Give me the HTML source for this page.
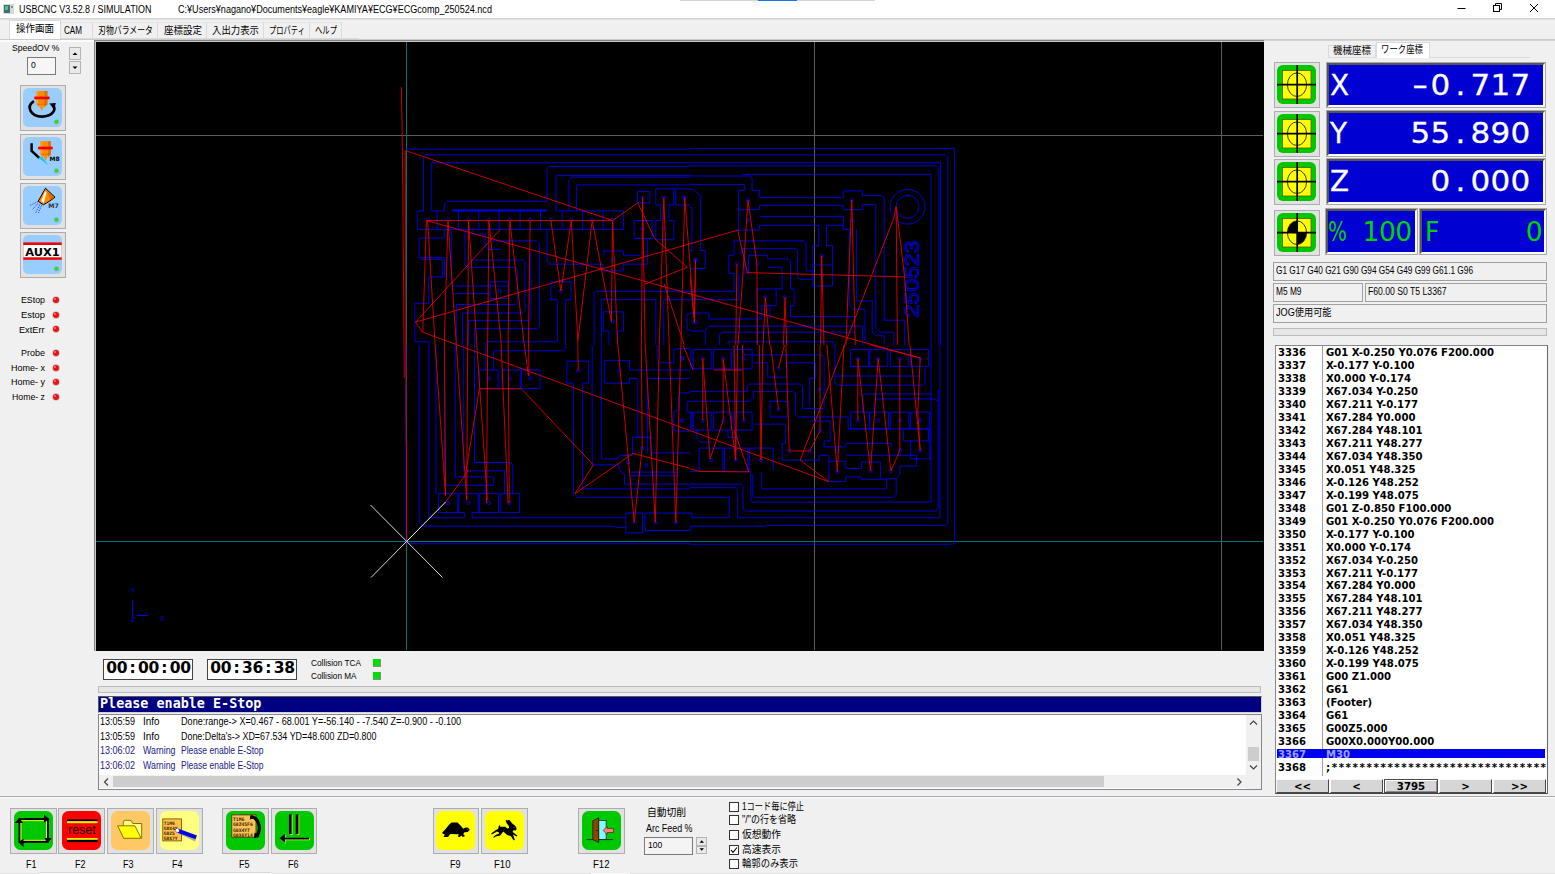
<!DOCTYPE html>
<html lang="ja">
<head>
<meta charset="utf-8">
<title>USBCNC V3.52.8 / SIMULATION</title>
<style>
*{box-sizing:border-box;margin:0;padding:0}
html,body{width:1555px;height:874px;overflow:hidden;background:#f0f0f0}
body{position:relative;font-family:"Liberation Sans","Noto Sans CJK JP",sans-serif;font-size:9.5px;color:#000}
.abs{position:absolute}
.t{position:absolute;white-space:nowrap;transform-origin:0 50%}
.frame{position:absolute;background:#e1e1e1;border:1px solid #adadad}
.ib{position:absolute;border-radius:6px}
.sbox{position:absolute;border:1px solid #a0a0a0;background:#f0f0f0}
.dro{position:absolute;background:#0000d2;border:2px solid #555;border-right-color:#fafafa;border-bottom-color:#fafafa;box-shadow:0 0 0 1px #a9a9a9}
.nav{position:absolute;top:779px;height:14px;background:#e1e1e1;border:1px solid #6d6d6d;border-top-color:#fff;border-left-color:#fff;box-shadow:0 0 0 1px #7a7a7a}
.cb{position:absolute;left:729px;width:10px;height:10px;border:1px solid #333;background:#fff}
</style>
</head>
<body>
<div class="abs" style="left:0;top:0;width:1555px;height:18px;background:#fff"></div>
<div class="abs" style="left:0;top:18px;width:1555px;height:2px;background:linear-gradient(#cdcdcd,#e6e6e6)"></div>
<div class="abs" style="left:680px;top:0;width:195px;height:1px;background:#d4d4d4"></div>
<div class="abs" style="left:758px;top:0;width:39px;height:1px;background:#1a73e8"></div>
<svg class="abs" style="left:3px;top:4px" width="11" height="10" viewBox="0 0 11 10"><rect x="0" y="0" width="11" height="10" fill="#d5dadd"/><rect x="1" y="1" width="6" height="8" fill="#3f6f74"/><rect x="2" y="2" width="3" height="4" fill="#5fb784"/><rect x="8" y="2" width="2" height="2" fill="#7f8f95"/></svg>
<div class="t" style="left:19px;top:3.5px;font-size:10px;line-height:12.0px;transform:scaleX(0.894)">USBCNC V3.52.8 / SIMULATION</div>
<div class="t" style="left:178px;top:3.5px;font-size:10px;line-height:12.0px;transform:scaleX(0.907)">C:¥Users¥nagano¥Documents¥eagle¥KAMIYA¥ECG¥ECGcomp_250524.ncd</div>
<svg class="abs" style="left:1440px;top:0" width="115" height="18" viewBox="0 0 115 18"><path d="M17.5 8.5h8" stroke="#000" stroke-width="1" fill="none"/><rect x="53.5" y="5.500" width="6" height="6" stroke="#000" fill="none"/><path d="M55.500 5.500v-2h6v6h-2" stroke="#000" fill="none"/><path d="M90 4l8 8M98 4l-8 8" stroke="#000" stroke-width="1" fill="none"/></svg>
<div class="abs" style="left:9px;top:38px;width:350px;height:1px;background:#dadada"></div>
<div class="abs" style="left:9px;top:20px;width:52px;height:19px;background:#fff;border:1px solid #dadada;border-bottom:none"></div>
<div class="t" style="left:16px;top:22.5px;font-size:10px;line-height:12.0px;transform:scaleX(0.950)">操作画面</div>
<div class="abs" style="left:61px;top:22px;width:32px;height:16px;border-right:1px solid #dadada;border-top:1px solid #e6e6e6"></div>
<div class="t" style="left:64px;top:24.5px;font-size:10px;line-height:12.0px;transform:scaleX(0.810)">CAM</div>
<div class="abs" style="left:93px;top:22px;width:65px;height:16px;border-right:1px solid #dadada;border-top:1px solid #e6e6e6"></div>
<div class="t" style="left:98.0px;top:24.5px;font-size:10px;line-height:12.0px;transform:scaleX(0.789)">刃物パラメータ</div>
<div class="abs" style="left:158px;top:22px;width:49px;height:16px;border-right:1px solid #dadada;border-top:1px solid #e6e6e6"></div>
<div class="t" style="left:163.5px;top:24.5px;font-size:10px;line-height:12.0px;transform:scaleX(0.950)">座標設定</div>
<div class="abs" style="left:207px;top:22px;width:57px;height:16px;border-right:1px solid #dadada;border-top:1px solid #e6e6e6"></div>
<div class="t" style="left:212.0px;top:24.5px;font-size:10px;line-height:12.0px;transform:scaleX(0.940)">入出力表示</div>
<div class="abs" style="left:264px;top:22px;width:46px;height:16px;border-right:1px solid #dadada;border-top:1px solid #e6e6e6"></div>
<div class="t" style="left:269.0px;top:24.5px;font-size:10px;line-height:12.0px;transform:scaleX(0.729)">プロパティ</div>
<div class="abs" style="left:310px;top:22px;width:32px;height:16px;border-right:1px solid #dadada;border-top:1px solid #e6e6e6"></div>
<div class="t" style="left:315.0px;top:24.5px;font-size:10px;line-height:12.0px;transform:scaleX(0.733)">ヘルプ</div>
<div class="t" style="left:11.5px;top:42.3px;font-size:9.5px;line-height:11.4px;transform:scaleX(0.908)">SpeedOV %</div>
<div class="abs" style="left:27px;top:57px;width:29px;height:18px;background:#f6f6f6;border:1px solid #7a7a7a"></div>
<div class="t" style="left:30.5px;top:59.3px;font-size:9.5px;line-height:11.4px;transform:scaleX(0.900)">0</div>
<div class="abs" style="left:69px;top:47px;width:12px;height:13px;background:#e9e9e9;border:1px solid #b4b4b4"></div>
<div class="abs" style="left:69px;top:61px;width:12px;height:13px;background:#e9e9e9;border:1px solid #b4b4b4"></div>
<svg class="abs" style="left:69px;top:47px" width="12" height="27" viewBox="0 0 12 27"><path d="M3.5 8L6 5.500L8.500 8z" fill="#000"/><path d="M3.500 19.5L6 22L8.500 19.500z" fill="#000"/></svg>
<div class="frame" style="left:20px;top:85px;width:46px;height:46px"></div>
<svg class="abs" style="left:23.100px;top:88px" width="39" height="39" viewBox="0 0 39 39"><rect x="0" y="0" width="39" height="39" rx="5.500" fill="#99ccff"/><path d="M13.2 3h11.200v13.200l-2.200 2.300h-1.300l-2.100 4.300l-2.100 -4.300h-1.300l-2.200 -2.300z" fill="#ff8c00"/><path d="M21.500 3h2.900v13.200l-2.200 2.300h-0.700z" fill="#e07000"/><path d="M13.200 3h2v13.200h-2z" fill="#ffa030"/><path d="M14.500 16.200h8.600" stroke="#c65a00" stroke-width="0.600"/><rect x="11.300" y="8.600" width="15.300" height="2.700" fill="#f00000"/><path d="M10 13.800C3.500 18.500 7 28.300 19 28.600C29 28.600 33.800 22 30 17.300" fill="none" stroke="#000" stroke-width="2.700" stroke-linecap="round"/><path d="M26.300 15.600l6.500 -0.600l-1.500 6.600z" fill="#000"/><circle cx="33.5" cy="33.8" r="2.600" fill="#9ab" opacity="0.7"/><circle cx="33.5" cy="33.8" r="2" fill="#22e022"/></svg>
<div class="frame" style="left:20px;top:133.5px;width:46px;height:46px"></div>
<svg class="abs" style="left:23.100px;top:136.5px" width="39" height="39" viewBox="0 0 39 39"><rect x="0" y="0" width="39" height="39" rx="5.500" fill="#99ccff"/><path d="M17.200 4.300h10.600v12.900l-2.100 2.200h-1.300l-1.900 4.600l-1.900 -4.600h-1.300l-2.100 -2.200z" fill="#ff8c00"/><path d="M25 4.300h2.800v12.900l-2.100 2.200h-0.700z" fill="#e07000"/><path d="M17.200 4.300h2v12.900h-2z" fill="#ffa030"/><path d="M18.500 17.200h8" stroke="#c65a00" stroke-width="0.600"/><rect x="15.100" y="9.700" width="14.600" height="2.700" fill="#f00000"/><path d="M8.600 6.300v7.600l7.600 7" fill="none" stroke="#000" stroke-width="2.500" stroke-linejoin="miter"/><path d="M15.500 21l3.500 -1.800l6.200 9z" fill="#18c8e8"/><text x="26.500" y="24" font-family="'DejaVu Sans','Liberation Sans',sans-serif" font-weight="bold" font-size="6" fill="#000">M8</text><circle cx="33.5" cy="33.8" r="2.600" fill="#9ab" opacity="0.7"/><circle cx="33.5" cy="33.8" r="2" fill="#22e022"/></svg>
<div class="frame" style="left:20px;top:183px;width:46px;height:46px"></div>
<svg class="abs" style="left:23.100px;top:186px" width="39" height="39" viewBox="0 0 39 39"><rect x="0" y="0" width="39" height="39" rx="5.500" fill="#99ccff"/><path d="M22.500 2.300L32 11.200C29 13.500 24 17 20.300 18.800L15.200 15.200z" fill="#ff8c00" stroke="#000" stroke-width="1"/><path d="M21.900 5.200L23.600 6.300L20.800 17L18.300 15.300z" fill="#fff" opacity="0.900"/><path d="M24 5.200L30.800 11.500L27.500 13.800z" fill="#d66a00"/><path d="M15 15.500L7 19.500M16 16.500L9 24M17.500 17.500L12.500 27M19 18.500L15 27.500" stroke="#2244ff" stroke-width="1" stroke-dasharray="1.100 0.900" fill="none"/><text x="25.300" y="22" font-family="'DejaVu Sans','Liberation Sans',sans-serif" font-weight="bold" font-size="6.200" fill="#333">M7</text><circle cx="33.5" cy="33.8" r="2.600" fill="#9ab" opacity="0.7"/><circle cx="33.5" cy="33.8" r="2" fill="#22e022"/></svg>
<div class="frame" style="left:20px;top:231.5px;width:46px;height:46px"></div>
<svg class="abs" style="left:23.100px;top:234.5px" width="39" height="39" viewBox="0 0 39 39"><rect x="0" y="0" width="39" height="39" rx="5.500" fill="#99ccff"/><rect x="0.300" y="7.400" width="38.400" height="17.400" fill="#f00000"/><rect x="0.300" y="10" width="38.400" height="12.300" fill="#fff"/><text x="2.300" y="20.800" font-family="'DejaVu Sans','Liberation Sans',sans-serif" font-weight="bold" font-size="11.300" textLength="34.500" lengthAdjust="spacingAndGlyphs" fill="#000">AUX1</text><circle cx="33.5" cy="33.8" r="2.600" fill="#9ab" opacity="0.7"/><circle cx="33.5" cy="33.8" r="2" fill="#22e022"/></svg>
<div class="t" style="left:20.5px;top:294.1px;font-size:9.5px;line-height:11.4px;transform:scaleX(0.927)">EStop</div>
<svg class="abs" style="left:51px;top:294.8px" width="10" height="10" viewBox="0 0 10 10"><circle cx="5" cy="5" r="3.800" fill="#b8a0a0" opacity="0.700"/><circle cx="5" cy="5" r="3" fill="#ee1111"/><circle cx="4" cy="4" r="1" fill="#ff8080"/></svg>
<div class="t" style="left:20.5px;top:309.3px;font-size:9.5px;line-height:11.4px;transform:scaleX(0.988)">Estop</div>
<svg class="abs" style="left:51px;top:310.0px" width="10" height="10" viewBox="0 0 10 10"><circle cx="5" cy="5" r="3.800" fill="#b8a0a0" opacity="0.700"/><circle cx="5" cy="5" r="3" fill="#ee1111"/><circle cx="4" cy="4" r="1" fill="#ff8080"/></svg>
<div class="t" style="left:19.0px;top:323.7px;font-size:9.5px;line-height:11.4px;transform:scaleX(0.966)">ExtErr</div>
<svg class="abs" style="left:51px;top:324.4px" width="10" height="10" viewBox="0 0 10 10"><circle cx="5" cy="5" r="3.800" fill="#b8a0a0" opacity="0.700"/><circle cx="5" cy="5" r="3" fill="#ee1111"/><circle cx="4" cy="4" r="1" fill="#ff8080"/></svg>
<div class="t" style="left:20.5px;top:347.3px;font-size:9.5px;line-height:11.4px;transform:scaleX(0.946)">Probe</div>
<svg class="abs" style="left:51px;top:348.0px" width="10" height="10" viewBox="0 0 10 10"><circle cx="5" cy="5" r="3.800" fill="#b8a0a0" opacity="0.700"/><circle cx="5" cy="5" r="3" fill="#ee1111"/><circle cx="4" cy="4" r="1" fill="#ff8080"/></svg>
<div class="t" style="left:10.5px;top:362.3px;font-size:9.5px;line-height:11.4px;transform:scaleX(0.947)">Home- x</div>
<svg class="abs" style="left:51px;top:363.0px" width="10" height="10" viewBox="0 0 10 10"><circle cx="5" cy="5" r="3.800" fill="#b8a0a0" opacity="0.700"/><circle cx="5" cy="5" r="3" fill="#ee1111"/><circle cx="4" cy="4" r="1" fill="#ff8080"/></svg>
<div class="t" style="left:10.5px;top:376.3px;font-size:9.5px;line-height:11.4px;transform:scaleX(0.947)">Home- y</div>
<svg class="abs" style="left:51px;top:377.0px" width="10" height="10" viewBox="0 0 10 10"><circle cx="5" cy="5" r="3.800" fill="#b8a0a0" opacity="0.700"/><circle cx="5" cy="5" r="3" fill="#ee1111"/><circle cx="4" cy="4" r="1" fill="#ff8080"/></svg>
<div class="t" style="left:11.5px;top:391.0px;font-size:9.5px;line-height:11.4px;transform:scaleX(0.919)">Home- z</div>
<svg class="abs" style="left:51px;top:391.7px" width="10" height="10" viewBox="0 0 10 10"><circle cx="5" cy="5" r="3.800" fill="#b8a0a0" opacity="0.700"/><circle cx="5" cy="5" r="3" fill="#ee1111"/><circle cx="4" cy="4" r="1" fill="#ff8080"/></svg>
<div class="abs" style="left:0;top:39px;width:1555px;height:2px;background:linear-gradient(#c6c6c6,#d8d8d8)"></div>
<div class="abs" style="left:0;top:40px;width:94px;height:2px;background:#fbfbfb"></div>
<div class="abs" style="left:94px;top:40px;width:1170px;height:611px;background:#c8c8c8;border-left:1px solid #828282;border-top:1px solid #828282"></div>
<div class="abs" style="left:96px;top:42px;width:1167.500px;height:608.500px;background:#000"></div>
<svg class="abs" style="left:96px;top:42px" width="1167" height="608" viewBox="96 42 1167 608">
<rect x="96" y="42" width="1167" height="608" fill="#000"/>
<path d="M96 135.500H1263M814.500 41V651M1221.500 41V651" stroke="#5c5c5c" stroke-width="1" fill="none"/>
<path d="M96 541.500H1263M406.500 41V651" stroke="#007474" stroke-width="1" fill="none"/>
<defs><clipPath id="c400_140"><rect x="396" y="130" width="294" height="215"/></clipPath><clipPath id="c680_140"><rect x="690" y="130" width="290" height="215"/></clipPath><clipPath id="c400_340"><rect x="396" y="345" width="294" height="215"/></clipPath><clipPath id="c680_340"><rect x="690" y="345" width="290" height="215"/></clipPath></defs>
<g fill="none" stroke="#0000f0" stroke-width="0.900" stroke-linejoin="round">
<path clip-path="url(#c400_140)" d="M406.0 149.1L700.0 149.1M700.0 154.9L425.2 154.9L423.5 156.8L423.5 210.9L417.3 210.9L417.3 229.4L623.4 229.4M700.0 162.8L431.2 162.8L431.2 210.9L444.4 210.9L444.4 203.7L446.8 201.3L547.0 201.3L547.0 168.3L548.9 166.4L700.0 166.4M437.2 210.9L437.2 229.4M458.4 210.4L458.4 229.4M478.8 210.4L478.8 229.4M499.2 210.4L499.2 229.4M520.1 210.4L520.1 229.4M540.5 210.4L540.5 229.4M700.0 175.6L556.1 175.6L556.1 210.9L623.4 210.9L623.4 229.4M562.1 210.9L562.1 229.4M582.6 210.9L582.6 229.4M603.0 210.9L603.0 229.4M700.0 177.2L571.8 177.2L568.9 180.1L568.9 210.9M700.0 184.9L576.6 184.9L576.6 210.9M637.3 191.6L649.8 191.6L649.8 202.9L637.3 202.9ZM655.8 188.8L673.8 188.8L673.8 204.9L669.0 204.9L669.0 220.5L673.8 220.5L673.8 239.7L655.8 239.7L655.8 220.5L660.6 220.5L660.6 204.9L655.8 204.9ZM700.0 191.6L695.5 191.6L693.1 188.8L675.8 188.8L675.8 204.9L691.9 204.9L691.9 250.5L700.0 250.5M634.2 220.5L652.2 220.5L652.2 238.5L634.2 238.5ZM444.4 229.4L444.4 238.0L419.2 238.0L419.2 257.7L444.4 257.7L444.4 276.9L428.8 276.9L428.8 303.3L414.9 303.3L414.9 341.8L428.8 341.8L428.8 349.9M421.1 259.4L442.3 259.4L442.3 278.1M451.6 229.4L451.6 284.1L453.3 286.0L509.3 286.0M472.1 229.4L472.1 234.2L485.3 234.2L485.3 245.7L488.4 249.3L500.9 249.3M492.5 240.9L536.9 240.9L539.3 243.3L539.3 326.2L536.9 328.6L474.5 328.6L474.5 349.9M464.9 229.4L464.9 264.9L467.3 267.3L515.3 267.3L517.7 269.7L517.7 302.1L515.3 304.5L456.4 304.5L456.4 349.9M469.7 260.1L522.5 260.1L524.9 262.5L524.9 310.6L522.5 313.0L462.5 313.0L462.5 349.9M530.9 252.9L530.9 319.0L528.5 320.6L468.5 320.6L468.5 349.9M490.1 281.7L508.1 281.7L508.1 298.5L490.1 298.5ZM452.8 293.7L490.1 293.7M547.0 229.4L547.0 261.3L550.1 264.2L603.0 264.2L603.0 270.9L623.4 270.9L623.4 264.2L647.4 264.2L647.4 239.7M603.7 255.3L603.7 251.0L623.4 251.0L623.4 255.3L640.2 255.3M565.7 349.9L565.7 299.7L571.0 299.7L571.0 281.7L550.9 281.7L550.9 299.7L557.3 299.7L557.3 341.8L486.5 341.8L484.1 344.2L484.1 349.9M594.1 349.9L594.1 293.7L596.5 291.3L700.0 291.3M601.3 349.9L601.3 299.7L655.8 299.7L655.8 349.9M663.8 349.9L663.8 299.7L700.0 299.7M617.4 349.9L617.4 331.0L623.4 331.0L623.4 311.8L603.0 311.8L603.0 331.0L609.0 331.0L609.0 349.9M700.0 314.2L687.1 314.2L687.1 329.8L700.0 329.8"/>
<path clip-path="url(#c680_140)" d="M680.0 148.4L954.6 148.4L954.6 349.9M680.0 154.9L945.4 154.9L947.8 157.3L947.8 349.9M680.0 162.8L940.6 162.8L940.6 349.9M680.0 165.9L936.5 165.9L938.9 168.3L938.9 349.9M742.5 174.4L931.0 174.4L931.0 349.9M680.0 176.0L749.7 176.0L752.1 178.4L752.1 190.4L759.3 190.4L759.3 197.7L843.3 197.7L843.3 190.9L862.6 190.9L862.6 195.7L881.8 195.7L884.2 198.1L884.2 320.2L904.6 320.2L904.6 349.9M680.0 184.4L744.4 184.4L744.4 190.4L738.4 190.4L738.4 230.1L759.3 230.1L759.3 225.3L818.8 225.3L818.8 245.7L812.8 245.7L812.8 286.0L832.5 286.0L832.5 245.7L826.5 245.7L826.5 225.3L843.3 225.3L843.3 229.4M738.4 209.7L759.3 209.7L759.3 205.3L843.3 205.3L843.3 209.7L862.6 209.7L862.6 204.4L875.8 204.4L875.8 327.4L880.6 332.2L893.8 332.2L893.8 349.9M759.3 216.4L843.3 216.4L843.3 229.4L849.3 229.4L849.3 305.7L853.0 309.3L865.0 309.3L865.0 339.4L869.8 344.2L869.8 349.9M856.6 229.4L856.6 300.9L872.2 300.9L872.2 332.2L875.8 335.8L884.2 335.8L884.2 349.9M812.8 264.9L832.5 264.9M680.0 189.2L693.2 189.2L695.6 191.6L700.4 195.2L700.4 250.5L705.2 250.5L705.2 268.5L680.0 268.5M680.0 207.3L692.0 207.3L692.0 250.5L680.0 250.5M734.0 291.3L734.0 273.3L728.8 273.3L728.8 255.3L734.0 255.3L734.0 240.9L803.7 240.9L806.1 243.3L806.1 270.9L812.8 270.9M680.0 291.3L734.0 291.3M741.3 255.3L741.3 248.6L795.3 248.6L797.7 251.0L797.7 276.9L800.1 279.3L812.8 279.3M744.9 255.3L744.9 273.3L748.5 273.3L748.5 255.3L767.7 255.3L767.7 258.9L788.1 258.9L790.5 261.3L790.5 288.9L794.1 288.9L794.1 305.7L790.5 305.7L790.5 316.6L854.2 316.6M767.7 267.3L782.1 267.3L782.1 288.9L757.3 288.9L757.3 349.9M776.1 288.9L776.1 305.7L770.1 305.7L770.1 319.0M680.0 299.7L738.9 299.7L738.9 273.3M688.4 331.0L688.4 313.0L708.8 313.0L708.8 319.0L761.7 319.0L761.7 305.7L770.1 305.7M688.4 331.0L704.0 331.0L708.8 326.2L862.6 326.2L862.6 349.9M705.2 331.0L705.2 349.9M719.6 349.9L719.6 334.6L722.0 332.2L855.4 332.2M728.0 349.9L728.0 341.8L833.7 341.8L833.7 349.9"/>
<path clip-path="url(#c400_340)" d="M406.0 340.0L406.0 543.7L700.0 543.7M419.2 340.0L419.2 522.6L422.8 526.2L613.8 526.2L616.2 527.4L625.8 527.4M428.8 340.0L428.8 517.8L464.4 517.8L464.4 512.5L438.4 512.5L438.4 493.7L457.7 493.7L457.7 512.5M458.9 512.5L458.9 493.7L478.1 493.7L478.1 512.5M472.1 517.8L472.1 512.5L498.5 512.5L498.5 493.7L479.3 493.7L479.3 512.5M472.1 517.8L625.8 517.8M500.9 493.7L519.6 493.7L519.6 512.5L500.9 512.5ZM474.5 340.0L474.5 462.5L510.5 462.5L512.9 464.9L512.9 493.7M463.7 340.0L463.7 470.9L504.5 470.9L504.5 493.7M455.2 340.0L455.2 476.9L492.5 476.9L493.7 478.1L493.7 485.3L485.3 485.3L485.3 493.7M444.4 340.0L444.4 485.3L485.3 485.3M436.0 340.0L436.0 493.7M479.3 370.0L498.0 370.0L498.0 388.5L479.3 388.5ZM502.1 370.0L520.8 370.0L520.8 388.5L502.1 388.5ZM521.3 370.0L540.0 370.0L540.0 388.5L521.3 388.5ZM485.3 340.0L485.3 370.0M486.5 342.4L565.7 342.4M493.7 370.0L493.7 350.8L563.3 350.8L565.7 348.4L565.7 340.0M700.0 488.9L582.6 488.9L582.6 383.2L588.6 383.2L588.6 361.1L566.9 361.1L566.9 383.2L573.4 383.2L573.4 493.7L576.6 497.3L700.0 497.3M592.2 340.0L592.2 464.9L618.6 464.9L621.0 472.1L624.6 474.5L624.6 484.1L700.0 484.1M601.3 340.0L601.3 458.9L618.6 458.9L619.8 455.3L632.5 455.3L632.5 437.3L651.0 437.3L651.0 452.9L700.0 452.9M700.0 370.0L629.4 370.0L629.4 360.4L604.7 360.4L604.7 383.2L629.4 383.2L629.4 378.4L637.8 378.4L637.8 437.3M700.0 378.4L647.4 378.4L647.4 452.9M630.6 472.1L678.6 472.1M630.6 475.7L678.6 475.7M700.0 392.8L681.0 392.8L678.6 395.2L678.6 409.7L673.8 412.1L673.8 430.1L678.6 431.3L700.0 431.3M700.0 401.3L687.1 401.3L687.1 412.1L691.9 412.1L691.9 426.5L700.0 426.5M657.0 340.0L657.0 359.2L660.6 362.8L673.8 362.8L673.8 349.6L681.0 348.4L700.0 348.4M625.8 513.0L642.6 513.0L642.6 532.9L625.8 532.9ZM700.0 517.8L691.9 517.8L690.7 513.0L645.0 513.0L645.0 530.5L691.9 530.5L691.9 525.0L700.0 525.0"/>
<path clip-path="url(#c680_340)" d="M954.6 340.0L954.6 543.0L952.6 544.2L680.0 544.2M947.8 340.0L947.8 522.6L945.4 525.4L766.5 525.4L765.3 526.2L690.8 526.2L690.8 530.2L680.0 530.2M939.9 340.0L939.9 517.8L737.7 517.8L737.7 490.1L735.2 487.7L680.0 487.7M938.2 390.4L938.2 508.1L935.8 511.0L744.9 511.0L742.9 509.3L742.9 486.5L741.3 484.1L680.0 484.1M931.0 340.0L931.0 502.1L752.1 502.1L750.9 500.9L750.9 474.5L749.7 471.6L680.0 471.6M896.2 479.3L896.2 494.9L893.8 497.3L754.5 497.3L752.8 495.7L752.8 474.5M761.7 471.6L761.7 488.9L886.6 488.9L886.6 478.8L896.2 478.8M680.0 497.3L729.2 497.3L729.2 517.8L692.0 517.8L692.0 513.4L680.0 513.4M728.0 341.9L834.9 341.9L834.9 383.2L837.3 385.2L922.6 385.2L925.0 382.8L925.0 368.3M742.5 349.6L744.9 354.9L821.7 354.9L824.1 357.3L824.1 408.5L802.5 408.5L802.5 386.8L800.1 384.0L749.7 384.0L747.3 386.8L747.3 391.6L680.0 391.6M786.9 377.2L786.9 362.8L815.7 362.8L815.7 378.4L809.7 378.4L809.7 407.3M754.5 362.8L767.7 362.8L767.7 377.2L786.9 377.2M753.3 391.6L792.9 391.6L795.3 394.0L795.3 414.5L797.7 416.9L848.1 416.9L848.1 428.9L891.4 428.9M753.3 391.6L753.3 397.7L749.7 401.3L687.2 401.3L687.2 412.1L692.0 412.1L692.0 428.9M770.1 401.3L788.1 401.3L788.1 416.9L770.1 416.9ZM754.5 424.1L785.7 424.1L785.7 443.3L782.1 443.3L782.1 460.1L819.3 460.1L819.3 455.3L828.9 455.3L828.9 481.7L845.7 481.7L845.7 476.9L861.4 476.9L861.4 479.3L886.6 479.3M809.7 421.2L830.1 421.2L830.1 440.9L824.1 440.9L824.1 446.9L845.7 446.9L845.7 443.3L891.4 443.3L891.4 446.9M699.2 470.9L699.2 448.1L722.8 448.1L722.8 470.9M724.4 470.9L724.4 448.1L748.0 448.1L748.0 470.9M749.7 470.9L749.7 448.1L773.2 448.1L773.2 470.9M850.6 349.6L868.6 349.6L868.6 366.4L850.6 366.4ZM850.6 412.1L869.3 412.1L869.3 428.9L850.6 428.9ZM869.8 349.6L887.8 349.6L887.8 366.4L869.8 366.4ZM869.8 412.1L888.5 412.1L888.5 428.9L869.8 428.9ZM890.2 349.6L908.2 349.6L908.2 366.4L890.2 366.4ZM890.2 412.1L908.9 412.1L908.9 428.9L890.2 428.9ZM910.6 349.6L928.6 349.6L928.6 366.4L910.6 366.4ZM910.6 412.1L929.3 412.1L929.3 428.9L910.6 428.9ZM672.8 349.6L690.8 349.6L690.8 368.8L672.8 368.8ZM672.8 412.1L690.8 412.1L690.8 430.1L672.8 430.1ZM693.2 349.6L711.2 349.6L711.2 368.8L693.2 368.8ZM693.2 412.1L711.2 412.1L711.2 430.1L693.2 430.1ZM713.6 349.6L731.6 349.6L731.6 368.8L713.6 368.8ZM713.6 412.1L731.6 412.1L731.6 430.1L713.6 430.1ZM734.0 349.6L752.1 349.6L752.1 368.8L734.0 368.8ZM734.0 412.1L752.1 412.1L752.1 430.1L734.0 430.1ZM834.9 376.0L920.2 376.0M931.0 394.0L862.6 394.0L862.6 412.1M938.2 401.3L934.6 398.9L877.0 398.9L874.1 402.5L874.1 412.1M903.4 428.9L928.6 428.9L928.6 440.9L903.4 440.9ZM910.6 440.9L910.6 458.9L929.8 458.9L929.8 428.9M845.7 455.3L916.6 455.3L916.6 466.1L899.8 466.1L899.8 474.5L896.2 478.8M828.9 461.3L845.7 461.3L845.7 468.5L861.4 468.5L861.4 462.0L880.6 462.0L880.6 478.8M696.8 430.1L696.8 438.5L700.4 442.1L711.2 442.1M728.0 430.1L728.0 437.3L740.1 437.3"/>
<path stroke-width="2" d="M452.4 210.4L547.0 210.4"/>
<circle cx="907.500" cy="206.800" r="17.300"/><circle cx="907.500" cy="206.800" r="11.500"/>
<circle cx="427.6" cy="219.8" r="1.600"/><circle cx="448.0" cy="219.8" r="1.600"/><circle cx="468.5" cy="219.8" r="1.600"/><circle cx="488.9" cy="219.8" r="1.600"/><circle cx="509.8" cy="219.8" r="1.600"/><circle cx="530.2" cy="219.8" r="1.600"/><circle cx="550.9" cy="219.8" r="1.600"/><circle cx="571.3" cy="219.8" r="1.600"/><circle cx="592.2" cy="219.8" r="1.600"/><circle cx="612.6" cy="219.8" r="1.600"/><circle cx="642.6" cy="197.7" r="1.600"/><circle cx="663.8" cy="197.7" r="1.600"/><circle cx="684.7" cy="197.7" r="1.600"/><circle cx="642.6" cy="228.9" r="1.600"/><circle cx="663.8" cy="228.9" r="1.600"/><circle cx="560.9" cy="290.9" r="1.600"/><circle cx="612.6" cy="259.6" r="1.600"/><circle cx="612.6" cy="321.4" r="1.600"/><circle cx="499.7" cy="290.9" r="1.600"/><circle cx="695.5" cy="260.1" r="1.600"/><circle cx="695.5" cy="321.4" r="1.600"/><circle cx="684.1" cy="197.7" r="1.600"/><circle cx="695.6" cy="259.6" r="1.600"/><circle cx="748.0" cy="200.1" r="1.600"/><circle cx="748.0" cy="220.5" r="1.600"/><circle cx="851.8" cy="200.1" r="1.600"/><circle cx="851.8" cy="220.5" r="1.600"/><circle cx="736.9" cy="263.7" r="1.600"/><circle cx="757.3" cy="263.7" r="1.600"/><circle cx="821.7" cy="255.8" r="1.600"/><circle cx="821.7" cy="275.7" r="1.600"/><circle cx="765.3" cy="297.3" r="1.600"/><circle cx="785.0" cy="297.3" r="1.600"/><circle cx="694.4" cy="322.6" r="1.600"/><circle cx="448.0" cy="502.9" r="1.600"/><circle cx="468.5" cy="502.9" r="1.600"/><circle cx="488.9" cy="502.9" r="1.600"/><circle cx="509.3" cy="502.9" r="1.600"/><circle cx="489.4" cy="378.4" r="1.600"/><circle cx="509.8" cy="378.4" r="1.600"/><circle cx="530.2" cy="378.4" r="1.600"/><circle cx="578.2" cy="370.7" r="1.600"/><circle cx="619.1" cy="370.7" r="1.600"/><circle cx="642.1" cy="448.1" r="1.600"/><circle cx="628.2" cy="462.5" r="1.600"/><circle cx="646.2" cy="465.4" r="1.600"/><circle cx="682.2" cy="358.0" r="1.600"/><circle cx="682.2" cy="420.5" r="1.600"/><circle cx="634.9" cy="522.6" r="1.600"/><circle cx="655.3" cy="522.6" r="1.600"/><circle cx="675.8" cy="522.6" r="1.600"/><circle cx="682.4" cy="358.7" r="1.600"/><circle cx="702.8" cy="358.7" r="1.600"/><circle cx="723.2" cy="358.7" r="1.600"/><circle cx="743.7" cy="358.7" r="1.600"/><circle cx="857.8" cy="358.7" r="1.600"/><circle cx="878.2" cy="358.7" r="1.600"/><circle cx="899.8" cy="358.7" r="1.600"/><circle cx="920.2" cy="358.7" r="1.600"/><circle cx="682.4" cy="420.5" r="1.600"/><circle cx="702.8" cy="420.5" r="1.600"/><circle cx="723.2" cy="420.5" r="1.600"/><circle cx="743.7" cy="420.5" r="1.600"/><circle cx="857.8" cy="420.5" r="1.600"/><circle cx="878.2" cy="420.5" r="1.600"/><circle cx="899.8" cy="420.5" r="1.600"/><circle cx="920.2" cy="420.5" r="1.600"/><circle cx="711.2" cy="460.1" r="1.600"/><circle cx="735.7" cy="460.1" r="1.600"/><circle cx="761.0" cy="460.1" r="1.600"/><circle cx="778.5" cy="368.3" r="1.600"/><circle cx="778.5" cy="409.7" r="1.600"/><circle cx="820.0" cy="389.2" r="1.600"/><circle cx="820.0" cy="430.8" r="1.600"/><circle cx="789.3" cy="451.0" r="1.600"/><circle cx="809.7" cy="451.0" r="1.600"/><circle cx="837.3" cy="471.6" r="1.600"/><circle cx="870.5" cy="470.9" r="1.600"/><circle cx="890.9" cy="470.9" r="1.600"/><circle cx="899.8" cy="450.5" r="1.600"/><circle cx="920.2" cy="450.5" r="1.600"/><circle cx="837.3" cy="451.0" r="1.600"/>
</g>
<text x="0" y="0" transform="translate(919.300 317.500) rotate(-90)" font-family="'Liberation Sans',sans-serif" font-size="20" textLength="77" lengthAdjust="spacingAndGlyphs" fill="none" stroke="#0000f0" stroke-width="0.800">250523</text>
<g fill="none" stroke="#e00000" stroke-width="0.900">
<path clip-path="url(#c400_140)" d="M406.0 150.8L612.6 220.5M426.4 220.5L612.6 220.5M612.6 220.5L637.8 202.9L654.6 238.5L687.1 267.3L645.0 284.1M415.6 322.1L500.4 229.4M415.6 322.1L422.8 332.2M426.4 220.5L422.8 332.2M550.9 220.5L560.9 290.9L571.3 220.5M592.2 220.5L611.4 321.4L612.6 220.5M664.2 284.1L685.9 349.9M694.3 317.8L695.5 260.1"/>
<path clip-path="url(#c680_140)" d="M737.7 230.1L747.3 272.6L904.6 276.9M684.1 197.7L688.4 260.1L694.4 322.6L695.6 259.6M748.0 200.1L737.7 349.9M748.0 200.1L756.9 263.7L757.3 349.9M736.9 263.7L735.7 349.9M762.9 349.9L765.3 297.3L770.1 349.9M783.3 349.9L785.0 297.3L786.9 349.9M820.5 349.9L821.7 255.8L824.1 349.9M845.7 349.9L851.8 200.1L855.4 349.9M896.2 206.8L897.4 349.9M893.8 218.1L896.2 206.8L904.6 276.9L909.4 349.9"/>
<path clip-path="url(#c400_340)" d="M521.3 388.8L593.4 464.9L574.9 493.7L633.0 453.4L700.0 470.9M479.3 388.8L521.3 388.8M445.6 502.1L464.9 475.7L468.5 469.7M479.3 388.8L465.3 475.7M681.0 340.0L693.1 370.0"/>
<path clip-path="url(#c680_340)" d="M680.0 466.1L699.2 471.4L748.9 471.9L734.0 430.1M800.1 460.1L828.9 481.7M851.8 340.0L920.2 358.0L917.8 412.1L920.2 450.5L909.4 340.0M857.8 358.7L870.5 470.9L878.2 358.7L890.9 470.9L899.8 450.5L899.8 358.7M857.8 358.7L857.8 420.5M826.5 340.0L837.3 471.6L844.3 340.0M820.0 340.0L820.0 430.8L809.7 451.0L789.3 451.0L785.7 340.0M770.1 340.0L778.5 409.7M785.7 340.0L778.5 368.3M759.3 340.0L761.0 460.1L762.9 340.0M742.5 340.0L743.7 420.5M734.0 340.0L735.7 460.1L737.7 340.0M735.7 460.1L723.2 358.7L723.2 420.5L710.0 458.9L702.8 358.7L702.8 420.5M713.6 370.0L742.5 370.0M680.0 340.0L693.2 370.0"/>
<path d="M426.4 220.5L920.2 358.0M415.6 322.0L738.3 230.0M422.8 332.2L828.9 481.7M893.8 218.0L800.1 460.1M401.3 87.0L402.0 122.0L402.8 186.0L404.3 378.0M405.3 150.5L406.2 443.0M406.5 443.0L406.5 541.0M427.6 220.5L434.8 340.0L445.6 496.0M448.0 220.5L444.4 340.0L445.6 496.0M448.0 220.5L466.7 500.0M468.5 220.5L466.7 500.0M468.5 220.5L487.3 500.0M488.9 220.5L487.7 340.0L486.5 503.0M488.9 220.5L500.9 340.0L508.1 503.0M509.8 220.5L508.1 340.0L509.3 503.0M509.8 220.5L523.7 340.0L528.5 376.0M530.2 220.5L528.5 340.0L529.0 376.0M571.3 220.5L577.8 340.0L578.2 370.7M592.2 220.5L578.0 340.0M612.6 220.5L617.4 340.0L634.2 522.6M642.6 197.6L641.4 350.0L642.2 448.0L634.2 522.6M642.6 197.6L645.0 340.0L655.3 522.6M663.8 197.6L659.4 340.0L655.3 522.6M663.8 197.6L669.0 340.0L675.8 522.6M684.7 197.6L681.0 340.0L675.8 522.6M684.7 197.6L694.3 317.8L695.5 260.0"/>
</g>
<path d="M370.500 505L442.500 577.500M371 577.500L406.500 541.500" stroke="#d8d8d8" stroke-width="1" fill="none"/>
<path d="M406.500 541.500L445.600 502" stroke="#f0f0f0" stroke-width="1" fill="none"/>
<path d="M132.500 600V617M137 615.500H148" stroke="#0000f0" stroke-width="1" fill="none"/>
<g font-family="'Liberation Sans',sans-serif" font-size="6.500" fill="#0000f0"><text x="131" y="593">Y</text><text x="160" y="621">X</text><text x="131" y="622">Z</text></g>
</svg>
<div class="abs" style="left:1328px;top:57px;width:202px;height:1px;background:#dadada"></div>
<div class="abs" style="left:1328px;top:44.500px;width:48px;height:13px;border:1px solid #dadada;border-bottom:none"></div>
<div class="abs" style="left:1375.500px;top:42px;width:54px;height:16px;background:#fff;border:1px solid #dadada;border-bottom:none"></div>
<div class="t" style="left:1333px;top:45.0px;font-size:10px;line-height:12.0px;transform:scaleX(0.950)">機械座標</div>
<div class="t" style="left:1381px;top:43.5px;font-size:10px;line-height:12.0px;transform:scaleX(0.840)">ワーク座標</div>
<div class="frame" style="left:1274px;top:62px;width:46px;height:46px"></div>
<svg class="abs" style="left:1277px;top:65.3px" width="39" height="39" viewBox="0 0 39 39"><rect x="0" y="0" width="39" height="39" rx="6" fill="#00c800"/><rect x="5.500" y="5.500" width="28.500" height="28.500" fill="#ffff00" stroke="#5a5a00" stroke-width="0.800"/><ellipse cx="20" cy="19.700" rx="9.600" ry="11.800" fill="none" stroke="#222" stroke-width="0.900"/><path d="M0 19.700h39M20.200 0v39" stroke="#000" stroke-width="1.700"/></svg>
<div class="frame" style="left:1274px;top:110.5px;width:46px;height:46px"></div>
<svg class="abs" style="left:1277px;top:113.8px" width="39" height="39" viewBox="0 0 39 39"><rect x="0" y="0" width="39" height="39" rx="6" fill="#00c800"/><rect x="5.500" y="5.500" width="28.500" height="28.500" fill="#ffff00" stroke="#5a5a00" stroke-width="0.800"/><ellipse cx="20" cy="19.700" rx="9.600" ry="11.800" fill="none" stroke="#222" stroke-width="0.900"/><path d="M0 19.700h39M20.200 0v39" stroke="#000" stroke-width="1.700"/></svg>
<div class="frame" style="left:1274px;top:159px;width:46px;height:46px"></div>
<svg class="abs" style="left:1277px;top:162.3px" width="39" height="39" viewBox="0 0 39 39"><rect x="0" y="0" width="39" height="39" rx="6" fill="#00c800"/><rect x="5.500" y="5.500" width="28.500" height="28.500" fill="#ffff00" stroke="#5a5a00" stroke-width="0.800"/><ellipse cx="20" cy="19.700" rx="9.600" ry="11.800" fill="none" stroke="#222" stroke-width="0.900"/><path d="M0 19.700h39M20.200 0v39" stroke="#000" stroke-width="1.700"/></svg>
<div class="frame" style="left:1274px;top:209.5px;width:46px;height:46px"></div>
<svg class="abs" style="left:1277px;top:212.8px" width="39" height="39" viewBox="0 0 39 39"><rect x="0" y="0" width="39" height="39" rx="6" fill="#00c800"/><rect x="5.500" y="5.500" width="28.500" height="28.500" fill="#ffff00" stroke="#5a5a00" stroke-width="0.800"/><path d="M20 19.700V7.900A9.600 11.800 0 0 0 10.400 19.700z" fill="#000"/><path d="M20 19.700V31.500A9.600 11.800 0 0 0 29.600 19.700z" fill="#000"/><ellipse cx="20" cy="19.700" rx="9.600" ry="11.800" fill="none" stroke="#222" stroke-width="0.900"/><path d="M0 19.700h39M20.200 0v39" stroke="#000" stroke-width="1.700"/></svg>
<div class="dro" style="left:1327px;top:62.5px;width:217.5px;height:44.5px"></div>
<div class="t" style="left:1329.500px;top:67.8px;font-size:31px;line-height:34.800px;font-family:'DejaVu Sans','Liberation Sans',sans-serif;color:#fff;-webkit-text-stroke:0.300px #fff;transform:scale(0.9,0.93);transform-origin:0 50%">X</div>
<div class="t" style="left:1329px;width:201.500px;top:67.8px;font-size:31px;line-height:34.800px;font-family:'DejaVu Sans','Liberation Sans',sans-serif;color:#fff;text-align:right;letter-spacing:0.300px;-webkit-text-stroke:0.300px #fff;transform:scaleY(0.93)"><span style="display:inline-block;width:20px;text-align:center;letter-spacing:0;transform:scaleX(1.45);">-</span>0<span style="display:inline-block;width:20px;text-align:center;letter-spacing:0;">.</span>717</div>
<div class="dro" style="left:1327px;top:111px;width:217.5px;height:44.5px"></div>
<div class="t" style="left:1329.500px;top:116.3px;font-size:31px;line-height:34.800px;font-family:'DejaVu Sans','Liberation Sans',sans-serif;color:#fff;-webkit-text-stroke:0.300px #fff;transform:scale(0.9,0.93);transform-origin:0 50%">Y</div>
<div class="t" style="left:1329px;width:201.500px;top:116.3px;font-size:31px;line-height:34.800px;font-family:'DejaVu Sans','Liberation Sans',sans-serif;color:#fff;text-align:right;letter-spacing:0.300px;-webkit-text-stroke:0.300px #fff;transform:scaleY(0.93)">55<span style="display:inline-block;width:20px;text-align:center;letter-spacing:0;">.</span>890</div>
<div class="dro" style="left:1327px;top:159px;width:217.5px;height:44.5px"></div>
<div class="t" style="left:1329.500px;top:164.3px;font-size:31px;line-height:34.800px;font-family:'DejaVu Sans','Liberation Sans',sans-serif;color:#fff;-webkit-text-stroke:0.300px #fff;transform:scale(0.9,0.93);transform-origin:0 50%">Z</div>
<div class="t" style="left:1329px;width:201.500px;top:164.3px;font-size:31px;line-height:34.800px;font-family:'DejaVu Sans','Liberation Sans',sans-serif;color:#fff;text-align:right;letter-spacing:0.300px;-webkit-text-stroke:0.300px #fff;transform:scaleY(0.93)">0<span style="display:inline-block;width:20px;text-align:center;letter-spacing:0;">.</span>000</div>
<div class="dro" style="left:1326px;top:209px;width:90.5px;height:45px"></div>
<div class="dro" style="left:1420px;top:209px;width:126px;height:45px"></div>
<div class="t" style="left:1328px;top:216.1px;font-size:26.500px;line-height:31.800px;font-family:'DejaVu Sans','Liberation Sans',sans-serif;color:#00d400;letter-spacing:-0.450px"><span style="display:inline-block;width:26.500px;transform:scaleX(0.75);transform-origin:0 50%">%</span> 100</div>
<div class="t" style="left:1424.5px;top:216.1px;font-size:26.5px;line-height:31.8px;font-family:'DejaVu Sans','Liberation Sans',sans-serif;color:#00d400;transform:scaleX(0.950)">F</div>
<div class="t" style="left:1424px;width:118.500px;text-align:right;top:216.1px;font-size:26.500px;line-height:31.800px;font-family:'DejaVu Sans','Liberation Sans',sans-serif;color:#00d400">0</div>
<div class="sbox" style="left:1273px;top:262px;width:274px;height:19px"></div>
<div class="t" style="left:1275.5px;top:264.5px;font-size:10px;line-height:12.0px;transform:scaleX(0.826)">G1 G17 G40 G21 G90 G94 G54 G49 G99 G61.1 G96</div>
<div class="sbox" style="left:1273px;top:283px;width:90px;height:19px"></div>
<div class="t" style="left:1275.5px;top:285.5px;font-size:10px;line-height:12.0px;transform:scaleX(0.834)">M5 M9</div>
<div class="sbox" style="left:1365px;top:283px;width:182px;height:19px"></div>
<div class="t" style="left:1368px;top:285.5px;font-size:10px;line-height:12.0px;transform:scaleX(0.863)">F60.00 S0 T5 L3367</div>
<div class="sbox" style="left:1273px;top:304px;width:274px;height:19px"></div>
<div class="t" style="left:1275.5px;top:306.5px;font-size:10px;line-height:12.0px;transform:scaleX(0.916)">JOG使用可能</div>
<div class="abs" style="left:1273px;top:327.500px;width:274px;height:8px;background:#e6e6e6;border:1px solid #bcbcbc"></div>
<div class="abs" style="left:1274.500px;top:344.500px;width:273px;height:449.500px;background:#fff;border:1px solid #828790;border-bottom-color:#444;border-right-color:#666"></div>
<div class="abs" style="left:1322px;top:346px;width:1px;height:430px;background:#a0a0a0"></div>
<div class="t" style="left:1278px;top:347.1px;font-size:10.2px;line-height:12.2px;font-family:'DejaVu Sans','Liberation Sans',sans-serif;font-weight:bold;color:#000;transform:scaleX(0.985)">3336</div>
<div class="t" style="left:1325.5px;top:347.1px;font-size:10.2px;line-height:12.2px;font-family:'DejaVu Sans','Liberation Sans',sans-serif;font-weight:bold;color:#000;transform:scaleX(0.990)">G01 X-0.250 Y0.076 F200.000</div>
<div class="t" style="left:1278px;top:360.0px;font-size:10.2px;line-height:12.2px;font-family:'DejaVu Sans','Liberation Sans',sans-serif;font-weight:bold;color:#000;transform:scaleX(0.985)">3337</div>
<div class="t" style="left:1325.5px;top:360.0px;font-size:10.2px;line-height:12.2px;font-family:'DejaVu Sans','Liberation Sans',sans-serif;font-weight:bold;color:#000;transform:scaleX(0.990)">X-0.177 Y-0.100</div>
<div class="t" style="left:1278px;top:373.0px;font-size:10.2px;line-height:12.2px;font-family:'DejaVu Sans','Liberation Sans',sans-serif;font-weight:bold;color:#000;transform:scaleX(0.985)">3338</div>
<div class="t" style="left:1325.5px;top:373.0px;font-size:10.2px;line-height:12.2px;font-family:'DejaVu Sans','Liberation Sans',sans-serif;font-weight:bold;color:#000;transform:scaleX(0.990)">X0.000 Y-0.174</div>
<div class="t" style="left:1278px;top:386.0px;font-size:10.2px;line-height:12.2px;font-family:'DejaVu Sans','Liberation Sans',sans-serif;font-weight:bold;color:#000;transform:scaleX(0.985)">3339</div>
<div class="t" style="left:1325.5px;top:386.0px;font-size:10.2px;line-height:12.2px;font-family:'DejaVu Sans','Liberation Sans',sans-serif;font-weight:bold;color:#000;transform:scaleX(0.990)">X67.034 Y-0.250</div>
<div class="t" style="left:1278px;top:398.9px;font-size:10.2px;line-height:12.2px;font-family:'DejaVu Sans','Liberation Sans',sans-serif;font-weight:bold;color:#000;transform:scaleX(0.985)">3340</div>
<div class="t" style="left:1325.5px;top:398.9px;font-size:10.2px;line-height:12.2px;font-family:'DejaVu Sans','Liberation Sans',sans-serif;font-weight:bold;color:#000;transform:scaleX(0.990)">X67.211 Y-0.177</div>
<div class="t" style="left:1278px;top:411.9px;font-size:10.2px;line-height:12.2px;font-family:'DejaVu Sans','Liberation Sans',sans-serif;font-weight:bold;color:#000;transform:scaleX(0.985)">3341</div>
<div class="t" style="left:1325.5px;top:411.9px;font-size:10.2px;line-height:12.2px;font-family:'DejaVu Sans','Liberation Sans',sans-serif;font-weight:bold;color:#000;transform:scaleX(0.990)">X67.284 Y0.000</div>
<div class="t" style="left:1278px;top:424.9px;font-size:10.2px;line-height:12.2px;font-family:'DejaVu Sans','Liberation Sans',sans-serif;font-weight:bold;color:#000;transform:scaleX(0.985)">3342</div>
<div class="t" style="left:1325.5px;top:424.9px;font-size:10.2px;line-height:12.2px;font-family:'DejaVu Sans','Liberation Sans',sans-serif;font-weight:bold;color:#000;transform:scaleX(0.990)">X67.284 Y48.101</div>
<div class="t" style="left:1278px;top:437.8px;font-size:10.2px;line-height:12.2px;font-family:'DejaVu Sans','Liberation Sans',sans-serif;font-weight:bold;color:#000;transform:scaleX(0.985)">3343</div>
<div class="t" style="left:1325.5px;top:437.8px;font-size:10.2px;line-height:12.2px;font-family:'DejaVu Sans','Liberation Sans',sans-serif;font-weight:bold;color:#000;transform:scaleX(0.990)">X67.211 Y48.277</div>
<div class="t" style="left:1278px;top:450.8px;font-size:10.2px;line-height:12.2px;font-family:'DejaVu Sans','Liberation Sans',sans-serif;font-weight:bold;color:#000;transform:scaleX(0.985)">3344</div>
<div class="t" style="left:1325.5px;top:450.8px;font-size:10.2px;line-height:12.2px;font-family:'DejaVu Sans','Liberation Sans',sans-serif;font-weight:bold;color:#000;transform:scaleX(0.990)">X67.034 Y48.350</div>
<div class="t" style="left:1278px;top:463.8px;font-size:10.2px;line-height:12.2px;font-family:'DejaVu Sans','Liberation Sans',sans-serif;font-weight:bold;color:#000;transform:scaleX(0.985)">3345</div>
<div class="t" style="left:1325.5px;top:463.8px;font-size:10.2px;line-height:12.2px;font-family:'DejaVu Sans','Liberation Sans',sans-serif;font-weight:bold;color:#000;transform:scaleX(0.990)">X0.051 Y48.325</div>
<div class="t" style="left:1278px;top:476.7px;font-size:10.2px;line-height:12.2px;font-family:'DejaVu Sans','Liberation Sans',sans-serif;font-weight:bold;color:#000;transform:scaleX(0.985)">3346</div>
<div class="t" style="left:1325.5px;top:476.7px;font-size:10.2px;line-height:12.2px;font-family:'DejaVu Sans','Liberation Sans',sans-serif;font-weight:bold;color:#000;transform:scaleX(0.990)">X-0.126 Y48.252</div>
<div class="t" style="left:1278px;top:489.7px;font-size:10.2px;line-height:12.2px;font-family:'DejaVu Sans','Liberation Sans',sans-serif;font-weight:bold;color:#000;transform:scaleX(0.985)">3347</div>
<div class="t" style="left:1325.5px;top:489.7px;font-size:10.2px;line-height:12.2px;font-family:'DejaVu Sans','Liberation Sans',sans-serif;font-weight:bold;color:#000;transform:scaleX(0.990)">X-0.199 Y48.075</div>
<div class="t" style="left:1278px;top:502.7px;font-size:10.2px;line-height:12.2px;font-family:'DejaVu Sans','Liberation Sans',sans-serif;font-weight:bold;color:#000;transform:scaleX(0.985)">3348</div>
<div class="t" style="left:1325.5px;top:502.7px;font-size:10.2px;line-height:12.2px;font-family:'DejaVu Sans','Liberation Sans',sans-serif;font-weight:bold;color:#000;transform:scaleX(0.990)">G01 Z-0.850 F100.000</div>
<div class="t" style="left:1278px;top:515.6px;font-size:10.2px;line-height:12.2px;font-family:'DejaVu Sans','Liberation Sans',sans-serif;font-weight:bold;color:#000;transform:scaleX(0.985)">3349</div>
<div class="t" style="left:1325.5px;top:515.6px;font-size:10.2px;line-height:12.2px;font-family:'DejaVu Sans','Liberation Sans',sans-serif;font-weight:bold;color:#000;transform:scaleX(0.990)">G01 X-0.250 Y0.076 F200.000</div>
<div class="t" style="left:1278px;top:528.6px;font-size:10.2px;line-height:12.2px;font-family:'DejaVu Sans','Liberation Sans',sans-serif;font-weight:bold;color:#000;transform:scaleX(0.985)">3350</div>
<div class="t" style="left:1325.5px;top:528.6px;font-size:10.2px;line-height:12.2px;font-family:'DejaVu Sans','Liberation Sans',sans-serif;font-weight:bold;color:#000;transform:scaleX(0.990)">X-0.177 Y-0.100</div>
<div class="t" style="left:1278px;top:541.6px;font-size:10.2px;line-height:12.2px;font-family:'DejaVu Sans','Liberation Sans',sans-serif;font-weight:bold;color:#000;transform:scaleX(0.985)">3351</div>
<div class="t" style="left:1325.5px;top:541.6px;font-size:10.2px;line-height:12.2px;font-family:'DejaVu Sans','Liberation Sans',sans-serif;font-weight:bold;color:#000;transform:scaleX(0.990)">X0.000 Y-0.174</div>
<div class="t" style="left:1278px;top:554.5px;font-size:10.2px;line-height:12.2px;font-family:'DejaVu Sans','Liberation Sans',sans-serif;font-weight:bold;color:#000;transform:scaleX(0.985)">3352</div>
<div class="t" style="left:1325.5px;top:554.5px;font-size:10.2px;line-height:12.2px;font-family:'DejaVu Sans','Liberation Sans',sans-serif;font-weight:bold;color:#000;transform:scaleX(0.990)">X67.034 Y-0.250</div>
<div class="t" style="left:1278px;top:567.5px;font-size:10.2px;line-height:12.2px;font-family:'DejaVu Sans','Liberation Sans',sans-serif;font-weight:bold;color:#000;transform:scaleX(0.985)">3353</div>
<div class="t" style="left:1325.5px;top:567.5px;font-size:10.2px;line-height:12.2px;font-family:'DejaVu Sans','Liberation Sans',sans-serif;font-weight:bold;color:#000;transform:scaleX(0.990)">X67.211 Y-0.177</div>
<div class="t" style="left:1278px;top:580.4px;font-size:10.2px;line-height:12.2px;font-family:'DejaVu Sans','Liberation Sans',sans-serif;font-weight:bold;color:#000;transform:scaleX(0.985)">3354</div>
<div class="t" style="left:1325.5px;top:580.4px;font-size:10.2px;line-height:12.2px;font-family:'DejaVu Sans','Liberation Sans',sans-serif;font-weight:bold;color:#000;transform:scaleX(0.990)">X67.284 Y0.000</div>
<div class="t" style="left:1278px;top:593.4px;font-size:10.2px;line-height:12.2px;font-family:'DejaVu Sans','Liberation Sans',sans-serif;font-weight:bold;color:#000;transform:scaleX(0.985)">3355</div>
<div class="t" style="left:1325.5px;top:593.4px;font-size:10.2px;line-height:12.2px;font-family:'DejaVu Sans','Liberation Sans',sans-serif;font-weight:bold;color:#000;transform:scaleX(0.990)">X67.284 Y48.101</div>
<div class="t" style="left:1278px;top:606.4px;font-size:10.2px;line-height:12.2px;font-family:'DejaVu Sans','Liberation Sans',sans-serif;font-weight:bold;color:#000;transform:scaleX(0.985)">3356</div>
<div class="t" style="left:1325.5px;top:606.4px;font-size:10.2px;line-height:12.2px;font-family:'DejaVu Sans','Liberation Sans',sans-serif;font-weight:bold;color:#000;transform:scaleX(0.990)">X67.211 Y48.277</div>
<div class="t" style="left:1278px;top:619.3px;font-size:10.2px;line-height:12.2px;font-family:'DejaVu Sans','Liberation Sans',sans-serif;font-weight:bold;color:#000;transform:scaleX(0.985)">3357</div>
<div class="t" style="left:1325.5px;top:619.3px;font-size:10.2px;line-height:12.2px;font-family:'DejaVu Sans','Liberation Sans',sans-serif;font-weight:bold;color:#000;transform:scaleX(0.990)">X67.034 Y48.350</div>
<div class="t" style="left:1278px;top:632.3px;font-size:10.2px;line-height:12.2px;font-family:'DejaVu Sans','Liberation Sans',sans-serif;font-weight:bold;color:#000;transform:scaleX(0.985)">3358</div>
<div class="t" style="left:1325.5px;top:632.3px;font-size:10.2px;line-height:12.2px;font-family:'DejaVu Sans','Liberation Sans',sans-serif;font-weight:bold;color:#000;transform:scaleX(0.990)">X0.051 Y48.325</div>
<div class="t" style="left:1278px;top:645.3px;font-size:10.2px;line-height:12.2px;font-family:'DejaVu Sans','Liberation Sans',sans-serif;font-weight:bold;color:#000;transform:scaleX(0.985)">3359</div>
<div class="t" style="left:1325.5px;top:645.3px;font-size:10.2px;line-height:12.2px;font-family:'DejaVu Sans','Liberation Sans',sans-serif;font-weight:bold;color:#000;transform:scaleX(0.990)">X-0.126 Y48.252</div>
<div class="t" style="left:1278px;top:658.2px;font-size:10.2px;line-height:12.2px;font-family:'DejaVu Sans','Liberation Sans',sans-serif;font-weight:bold;color:#000;transform:scaleX(0.985)">3360</div>
<div class="t" style="left:1325.5px;top:658.2px;font-size:10.2px;line-height:12.2px;font-family:'DejaVu Sans','Liberation Sans',sans-serif;font-weight:bold;color:#000;transform:scaleX(0.990)">X-0.199 Y48.075</div>
<div class="t" style="left:1278px;top:671.2px;font-size:10.2px;line-height:12.2px;font-family:'DejaVu Sans','Liberation Sans',sans-serif;font-weight:bold;color:#000;transform:scaleX(0.985)">3361</div>
<div class="t" style="left:1325.5px;top:671.2px;font-size:10.2px;line-height:12.2px;font-family:'DejaVu Sans','Liberation Sans',sans-serif;font-weight:bold;color:#000;transform:scaleX(0.990)">G00 Z1.000</div>
<div class="t" style="left:1278px;top:684.2px;font-size:10.2px;line-height:12.2px;font-family:'DejaVu Sans','Liberation Sans',sans-serif;font-weight:bold;color:#000;transform:scaleX(0.985)">3362</div>
<div class="t" style="left:1325.5px;top:684.2px;font-size:10.2px;line-height:12.2px;font-family:'DejaVu Sans','Liberation Sans',sans-serif;font-weight:bold;color:#000;transform:scaleX(0.990)">G61</div>
<div class="t" style="left:1278px;top:697.1px;font-size:10.2px;line-height:12.2px;font-family:'DejaVu Sans','Liberation Sans',sans-serif;font-weight:bold;color:#000;transform:scaleX(0.985)">3363</div>
<div class="t" style="left:1325.5px;top:697.1px;font-size:10.2px;line-height:12.2px;font-family:'DejaVu Sans','Liberation Sans',sans-serif;font-weight:bold;color:#000;transform:scaleX(0.990)">(Footer)</div>
<div class="t" style="left:1278px;top:710.1px;font-size:10.2px;line-height:12.2px;font-family:'DejaVu Sans','Liberation Sans',sans-serif;font-weight:bold;color:#000;transform:scaleX(0.985)">3364</div>
<div class="t" style="left:1325.5px;top:710.1px;font-size:10.2px;line-height:12.2px;font-family:'DejaVu Sans','Liberation Sans',sans-serif;font-weight:bold;color:#000;transform:scaleX(0.990)">G61</div>
<div class="t" style="left:1278px;top:723.1px;font-size:10.2px;line-height:12.2px;font-family:'DejaVu Sans','Liberation Sans',sans-serif;font-weight:bold;color:#000;transform:scaleX(0.985)">3365</div>
<div class="t" style="left:1325.5px;top:723.1px;font-size:10.2px;line-height:12.2px;font-family:'DejaVu Sans','Liberation Sans',sans-serif;font-weight:bold;color:#000;transform:scaleX(0.990)">G00Z5.000</div>
<div class="t" style="left:1278px;top:736.0px;font-size:10.2px;line-height:12.2px;font-family:'DejaVu Sans','Liberation Sans',sans-serif;font-weight:bold;color:#000;transform:scaleX(0.985)">3366</div>
<div class="t" style="left:1325.5px;top:736.0px;font-size:10.2px;line-height:12.2px;font-family:'DejaVu Sans','Liberation Sans',sans-serif;font-weight:bold;color:#000;transform:scaleX(0.990)">G00X0.000Y00.000</div>
<div class="abs" style="left:1277px;top:749.1px;width:268px;height:8.600px;background:#0000f0"></div>
<div class="t" style="left:1278px;top:749.0px;font-size:10.2px;line-height:12.2px;font-family:'DejaVu Sans','Liberation Sans',sans-serif;font-weight:bold;color:#9aa0ff;transform:scaleX(0.985)">3367</div>
<div class="t" style="left:1325.5px;top:749.0px;font-size:10.2px;line-height:12.2px;font-family:'DejaVu Sans','Liberation Sans',sans-serif;font-weight:bold;color:#9aa0ff;transform:scaleX(0.990)">M30</div>
<div class="t" style="left:1278px;top:762.0px;font-size:10.2px;line-height:12.2px;font-family:'DejaVu Sans','Liberation Sans',sans-serif;font-weight:bold;color:#000;transform:scaleX(0.985)">3368</div>
<div class="abs" style="left:1324px;top:761.1px;width:222px;height:14px;overflow:hidden"><div class="t" style="left:1.5px;top:0.9px;font-size:10.2px;line-height:12.2px;font-family:'DejaVu Sans','Liberation Sans',sans-serif;font-weight:bold;color:#000;letter-spacing:1.500px;transform:scaleX(1.020)">;********************************</div></div>
<div class="abs" style="left:1276px;top:779px;width:53px;height:14px;background:#d6d6d6;border:1px solid #4a4a4a;border-top-color:#f8f8f8;border-left-color:#f8f8f8"></div>
<div class="t" style="left:1276px;width:53px;top:779.500px;text-align:center;font-family:'DejaVu Sans','Liberation Sans',sans-serif;font-weight:bold;font-size:10.200px;line-height:13px">&lt;&lt;</div>
<div class="abs" style="left:1330px;top:779px;width:53px;height:14px;background:#d6d6d6;border:1px solid #4a4a4a;border-top-color:#f8f8f8;border-left-color:#f8f8f8"></div>
<div class="t" style="left:1330px;width:53px;top:779.500px;text-align:center;font-family:'DejaVu Sans','Liberation Sans',sans-serif;font-weight:bold;font-size:10.200px;line-height:13px">&lt;</div>
<div class="abs" style="left:1384px;top:779px;width:54px;height:14px;background:#d6d6d6;border:1px solid #4a4a4a;box-shadow:inset 1px 1px 0 #fff,inset -1px -1px 0 #8a8a8a"></div>
<div class="t" style="left:1384px;width:54px;top:779.500px;text-align:center;font-family:'DejaVu Sans','Liberation Sans',sans-serif;font-weight:bold;font-size:10.200px;line-height:13px">3795</div>
<div class="abs" style="left:1439px;top:779px;width:53px;height:14px;background:#d6d6d6;border:1px solid #4a4a4a;border-top-color:#f8f8f8;border-left-color:#f8f8f8"></div>
<div class="t" style="left:1439px;width:53px;top:779.500px;text-align:center;font-family:'DejaVu Sans','Liberation Sans',sans-serif;font-weight:bold;font-size:10.200px;line-height:13px">&gt;</div>
<div class="abs" style="left:1493px;top:779px;width:53px;height:14px;background:#d6d6d6;border:1px solid #4a4a4a;border-top-color:#f8f8f8;border-left-color:#f8f8f8"></div>
<div class="t" style="left:1493px;width:53px;top:779.500px;text-align:center;font-family:'DejaVu Sans','Liberation Sans',sans-serif;font-weight:bold;font-size:10.200px;line-height:13px">&gt;&gt;</div>
<div class="abs" style="left:103px;top:659px;width:90px;height:21px;background:#fff;border:1px solid #444"></div>
<div class="t" style="left:106.3px;top:659.3px;font-size:15.500px;line-height:18px;font-family:'DejaVu Sans','Liberation Sans',sans-serif;font-weight:bold;letter-spacing:-0.300px">00<span style="display:inline-block;width:10.800px;text-align:center;letter-spacing:0">:</span>00<span style="display:inline-block;width:10.800px;text-align:center;letter-spacing:0">:</span>00</div>
<div class="abs" style="left:207px;top:659px;width:90px;height:21px;background:#fff;border:1px solid #444"></div>
<div class="t" style="left:210.3px;top:659.3px;font-size:15.500px;line-height:18px;font-family:'DejaVu Sans','Liberation Sans',sans-serif;font-weight:bold;letter-spacing:-0.300px">00<span style="display:inline-block;width:10.800px;text-align:center;letter-spacing:0">:</span>36<span style="display:inline-block;width:10.800px;text-align:center;letter-spacing:0">:</span>38</div>
<div class="t" style="left:311px;top:657.3px;font-size:9.5px;line-height:11.4px;transform:scaleX(0.871)">Collision TCA</div>
<div class="t" style="left:311px;top:670.3px;font-size:9.5px;line-height:11.4px;transform:scaleX(0.862)">Collision MA</div>
<div class="abs" style="left:372.500px;top:658.500px;width:8px;height:8px;background:#00e000;border-right:1px solid #8a8a8a;border-bottom:1px solid #8a8a8a"></div>
<div class="abs" style="left:372.500px;top:671.500px;width:8px;height:8px;background:#00e000;border-right:1px solid #8a8a8a;border-bottom:1px solid #8a8a8a"></div>
<div class="abs" style="left:98px;top:685.500px;width:1163px;height:7px;background:#e6e6e6;border:1px solid #bcbcbc"></div>
<div class="abs" style="left:98px;top:696px;width:1163.500px;height:17px;background:#000080;border:1px solid #5a5a5a;border-bottom-color:#d0d0d0;border-right-color:#d0d0d0"></div>
<div class="t" style="left:99.5px;top:695.4px;font-size:13.5px;line-height:16.2px;font-family:'DejaVu Sans Mono','Liberation Mono',monospace;font-weight:bold;color:#fff;transform:scaleX(0.993)">Please enable E-Stop</div>
<div class="abs" style="left:98px;top:714px;width:1163.500px;height:76px;background:#fff;border:1px solid #828790"></div>
<div class="t" style="left:99.8px;top:716.0px;font-size:10px;line-height:12.0px;color:#000;transform:scaleX(0.899)">13:05:59</div>
<div class="t" style="left:142.7px;top:716.0px;font-size:10px;line-height:12.0px;color:#000;transform:scaleX(0.989)">Info</div>
<div class="t" style="left:181.3px;top:716.0px;font-size:10px;line-height:12.0px;color:#000;transform:scaleX(0.910)">Done:range-&gt; X=0.467 - 68.001 Y=-56.140 - -7.540 Z=-0.900 - -0.100</div>
<div class="t" style="left:99.8px;top:730.6px;font-size:10px;line-height:12.0px;color:#000;transform:scaleX(0.899)">13:05:59</div>
<div class="t" style="left:142.7px;top:730.6px;font-size:10px;line-height:12.0px;color:#000;transform:scaleX(0.989)">Info</div>
<div class="t" style="left:181.3px;top:730.6px;font-size:10px;line-height:12.0px;color:#000;transform:scaleX(0.892)">Done:Delta's-&gt; XD=67.534 YD=48.600 ZD=0.800</div>
<div class="t" style="left:99.8px;top:745.2px;font-size:10px;line-height:12.0px;color:#1a1a8c;transform:scaleX(0.899)">13:06:02</div>
<div class="t" style="left:142.7px;top:745.2px;font-size:10px;line-height:12.0px;color:#1a1a8c;transform:scaleX(0.881)">Warning</div>
<div class="t" style="left:181.3px;top:745.2px;font-size:10px;line-height:12.0px;color:#1a1a8c;transform:scaleX(0.853)">Please enable E-Stop</div>
<div class="t" style="left:99.8px;top:759.8px;font-size:10px;line-height:12.0px;color:#1a1a8c;transform:scaleX(0.899)">13:06:02</div>
<div class="t" style="left:142.7px;top:759.8px;font-size:10px;line-height:12.0px;color:#1a1a8c;transform:scaleX(0.881)">Warning</div>
<div class="t" style="left:181.3px;top:759.8px;font-size:10px;line-height:12.0px;color:#1a1a8c;transform:scaleX(0.853)">Please enable E-Stop</div>
<div class="abs" style="left:99px;top:774.500px;width:1147px;height:13.500px;background:#f0f0f0"></div>
<div class="abs" style="left:113px;top:775.500px;width:991px;height:11.500px;background:#cdcdcd"></div>
<svg class="abs" style="left:99px;top:774.500px" width="1147" height="14" viewBox="0 0 1147 14"><path d="M9 3.500L5.500 7L9 10.500" fill="none" stroke="#444" stroke-width="1.200"/><path d="M1138.500 3.500L1142 7L1138.500 10.500" fill="none" stroke="#444" stroke-width="1.200"/></svg>
<div class="abs" style="left:1246px;top:715px;width:14.500px;height:59.500px;background:#f0f0f0"></div>
<div class="abs" style="left:1247.500px;top:746.500px;width:11.500px;height:14px;background:#cdcdcd"></div>
<svg class="abs" style="left:1246px;top:715px" width="15" height="60" viewBox="0 0 15 60"><path d="M4 9.500L7.500 6L11 9.500" fill="none" stroke="#444" stroke-width="1.200"/><path d="M4 50.500L7.500 54L11 50.500" fill="none" stroke="#444" stroke-width="1.200"/></svg>
<div class="abs" style="left:1246px;top:774.500px;width:14.500px;height:14px;background:#f0f0f0"></div>
<div class="abs" style="left:0;top:796px;width:1555px;height:1px;background:#a8a8a8"></div>
<div class="abs" style="left:0;top:797px;width:1555px;height:1px;background:#fdfdfd"></div>
<div class="frame" style="left:10px;top:807.500px;width:46.500px;height:46px"></div><svg class="abs" style="left:13.7px;top:810.600px" width="39" height="39" viewBox="0 0 39 39"><rect x="0" y="0" width="39" height="39" rx="6.500" fill="#00c800"/><rect x="5.500" y="8.100" width="28.500" height="22.700" fill="none" stroke="#000" stroke-width="2"/><rect x="7" y="9.600" width="25.500" height="19.700" fill="none" stroke="#f0f000" stroke-width="1"/><path d="M30 3.500L35.500 8.200L30 11.500z" fill="#000"/><path d="M30.500 27L35 27L38 27.500L33 32z" fill="#000"/><path d="M9.500 27.500L4.500 31.500L9.500 36z" fill="#000"/><path d="M0.500 12L5.500 7L9 12z" fill="#000"/></svg>
<div class="frame" style="left:58px;top:807.500px;width:46.500px;height:46px"></div><svg class="abs" style="left:61.7px;top:810.600px" width="39" height="39" viewBox="0 0 39 39"><rect x="0" y="0" width="39" height="39" rx="6.500" fill="#ff0000"/><rect x="5" y="8.400" width="30.600" height="1.800" fill="#000"/><rect x="5" y="10.200" width="30.600" height="2" fill="#f0f000"/><rect x="5" y="27" width="30.600" height="1.900" fill="#f0f000"/><rect x="5" y="28.900" width="30.600" height="2.200" fill="#000"/><text x="6" y="22.800" font-family="'Liberation Sans',sans-serif" font-size="12.500" textLength="27.800" lengthAdjust="spacingAndGlyphs" fill="#200000">reset</text></svg>
<div class="frame" style="left:107.3px;top:807.500px;width:46.500px;height:46px"></div><svg class="abs" style="left:111.0px;top:810.600px" width="39" height="39" viewBox="0 0 39 39"><rect x="0" y="0" width="39" height="39" rx="6.500" fill="#ffc864"/><path d="M12.300 14.800V11.500Q12.300 9.300 14.500 9.300H19Q20.800 9.300 21.700 12.500H30.700V27.300" fill="#ffff80" stroke="#7a6400" stroke-width="0.900"/><path d="M6.600 14.800H23.900L30.200 27.300H12.700z" fill="#ffff00" stroke="#7a6400" stroke-width="0.900"/></svg>
<div class="frame" style="left:156px;top:807.500px;width:46.500px;height:46px"></div><svg class="abs" style="left:159.7px;top:810.600px" width="39" height="39" viewBox="0 0 39 39"><rect x="0" y="0" width="39" height="39" rx="6.500" fill="#ffff80"/><rect x="2.800" y="7.900" width="18.600" height="22" fill="#ffc04a" stroke="#6a4a00" stroke-width="0.800"/><text x="3.8" y="13.5" font-family="'DejaVu Sans Mono','Liberation Mono',monospace" font-weight="bold" font-size="4.6" fill="#3a2a00">T1M6</text><text x="3.8" y="18.6" font-family="'DejaVu Sans Mono','Liberation Mono',monospace" font-weight="bold" font-size="4.6" fill="#3a2a00">G0X4Y</text><text x="3.8" y="23.7" font-family="'DejaVu Sans Mono','Liberation Mono',monospace" font-weight="bold" font-size="4.6" fill="#3a2a00">G0Z5</text><text x="3.8" y="28.8" font-family="'DejaVu Sans Mono','Liberation Mono',monospace" font-weight="bold" font-size="4.6" fill="#3a2a00">G0X7Y</text><path d="M19 22.500L35 30.500L36 28.500z" fill="#9a9a9a" opacity="0.800"/><path d="M14.500 18.700L17.800 17.600L37 24.500L35.500 28.300L16.500 21.500z" fill="#0000e6"/><path d="M14.300 18.600L18 17.500L19.500 20L17.300 21.800z" fill="#fff"/><path d="M13.800 18.300L15.800 18L15.300 19.500z" fill="#000"/></svg>
<div class="frame" style="left:222.2px;top:807.500px;width:46.500px;height:46px"></div><svg class="abs" style="left:225.89999999999998px;top:810.600px" width="39" height="39" viewBox="0 0 39 39"><rect x="0" y="0" width="39" height="39" rx="6.500" fill="#00c800"/><rect x="5.800" y="3.900" width="24.200" height="22.300" fill="#ffc058" stroke="#3a2a00" stroke-width="0.800"/><text x="7" y="9.5" font-family="'DejaVu Sans Mono','Liberation Mono',monospace" font-weight="bold" font-size="4.7" fill="#3a2a00">T1M6</text><text x="7" y="15.1" font-family="'DejaVu Sans Mono','Liberation Mono',monospace" font-weight="bold" font-size="4.7" fill="#3a2a00">G0Z45F6</text><text x="7" y="20.7" font-family="'DejaVu Sans Mono','Liberation Mono',monospace" font-weight="bold" font-size="4.7" fill="#3a2a00">G0X4Y7</text><text x="7" y="26.3" font-family="'DejaVu Sans Mono','Liberation Mono',monospace" font-weight="bold" font-size="4.7" fill="#3a2a00">G0X6Y14</text><path d="M25 5.500C33 7 36 18 30.500 26" fill="none" stroke="#000" stroke-width="3.200"/><path d="M28.500 21.500L33.500 25L28 27.500z" fill="#000"/><path d="M24.300 4L27.500 7.500L23.800 8.500z" fill="#000"/></svg>
<div class="frame" style="left:270.8px;top:807.500px;width:46.500px;height:46px"></div><svg class="abs" style="left:274.5px;top:810.600px" width="39" height="39" viewBox="0 0 39 39"><rect x="0" y="0" width="39" height="39" rx="6.500" fill="#00c800"/><path d="M16.100 4v20M22.900 4v20" stroke="#f4f060" stroke-width="2.700"/><path d="M14 3.200v20M20.800 3.200v20" stroke="#000" stroke-width="2.700" transform="translate(1.300 0)"/><path d="M5 28L10.500 23.800V27.200H34.800V29.200H10.500V32.800z" fill="#f4f060"/><path d="M4.400 27.300L9.900 23V26.700H34V28.500H9.900V31.800z" fill="#000"/></svg>
<div class="frame" style="left:432.6px;top:807.500px;width:46.500px;height:46px"></div><svg class="abs" style="left:436.3px;top:810.600px" width="39" height="39" viewBox="0 0 39 39"><rect x="0" y="0" width="39" height="39" rx="6.500" fill="#ffff00"/><path d="M6.300 21.500L9.800 17.700L13 13.800L15.600 11.600H21.400L24.600 14.500L27.200 17.700L29.500 16.400L32.300 16.700L33.800 19L31.700 20.900L28.500 21.200L27.200 23.200L29 25.100L26.900 26L25.200 24.400L23.800 26L21.900 25.700L22.800 23.200L14.300 23L12 26L7.500 25.900L8.800 23.500L6.500 22.500z" fill="#000"/><circle cx="31.800" cy="18.300" r="0.600" fill="#6a6a00"/></svg>
<div class="frame" style="left:481.3px;top:807.500px;width:46.500px;height:46px"></div><svg class="abs" style="left:485.0px;top:810.600px" width="39" height="39" viewBox="0 0 39 39"><rect x="0" y="0" width="39" height="39" rx="6.500" fill="#ffff00"/><path d="M20.600 8.700L22.300 9.600L24.100 8.700L27.300 12.500L29.900 14.500L31.500 17L31.200 19.300L28 19.600L27.700 20.900L32.500 24.800L31.600 25.500L28 23.500L29.900 28.900L28.600 29.300L25.700 25.100L22.200 24.100L18.300 20.600L15.100 24.400L10.600 25.400L8.700 27L8.400 26L10.600 24.100L13.800 22.800L14.100 21.500L11.900 20.600L6.800 23.500L6.100 22.500L10.600 19.300L13.200 17.700L14.100 13.800L15.400 15.800H20.300L22.200 17.400L24.100 17L23.800 15.100L21.500 11.900z" fill="#000"/><circle cx="29" cy="16.500" r="0.700" fill="#6a6a00"/></svg>
<div class="frame" style="left:578.4px;top:807.500px;width:46.500px;height:46px"></div><svg class="abs" style="left:582.1px;top:810.600px" width="39" height="39" viewBox="0 0 39 39"><rect x="0" y="0" width="39" height="39" rx="6.500" fill="#00c800"/><rect x="16.700" y="9.600" width="7.400" height="19" fill="#80ffff" stroke="#222" stroke-width="0.700"/><path d="M4.500 28.600H30.900" stroke="#222" stroke-width="0.900"/><path d="M10.800 9.800L16.700 6.800V31.500L10.800 28.600z" fill="#8c4600" stroke="#2a1500" stroke-width="0.800"/><path d="M14 19.500h1.800" stroke="#111" stroke-width="0.800"/><path d="M21.200 19.500L25.100 15.400V17.400H31.500V21.500H25.100V23.500z" fill="#ff8080" stroke="#5a2020" stroke-width="0.700"/></svg>
<div class="t" style="left:26px;top:858.5px;font-size:10px;line-height:12.0px;transform:scaleX(0.900)">F1</div>
<div class="t" style="left:74.5px;top:858.5px;font-size:10px;line-height:12.0px;transform:scaleX(0.900)">F2</div>
<div class="t" style="left:123px;top:858.5px;font-size:10px;line-height:12.0px;transform:scaleX(0.900)">F3</div>
<div class="t" style="left:171.5px;top:858.5px;font-size:10px;line-height:12.0px;transform:scaleX(0.900)">F4</div>
<div class="t" style="left:238.5px;top:858.5px;font-size:10px;line-height:12.0px;transform:scaleX(0.900)">F5</div>
<div class="t" style="left:287.5px;top:858.5px;font-size:10px;line-height:12.0px;transform:scaleX(0.900)">F6</div>
<div class="t" style="left:450px;top:858.5px;font-size:10px;line-height:12.0px;transform:scaleX(0.900)">F9</div>
<div class="t" style="left:494px;top:858.5px;font-size:10px;line-height:12.0px;transform:scaleX(0.957)">F10</div>
<div class="t" style="left:593px;top:858.5px;font-size:10px;line-height:12.0px;transform:scaleX(0.957)">F12</div>
<div class="t" style="left:646.5px;top:806.5px;font-size:10px;line-height:12.0px;transform:scaleX(0.975)">自動切削</div>
<div class="t" style="left:646px;top:823.0px;font-size:10px;line-height:12.0px;transform:scaleX(0.890)">Arc Feed %</div>
<div class="abs" style="left:644px;top:836.500px;width:48.500px;height:18px;background:#f4f4f4;border:1px solid #7a7a7a"></div>
<div class="t" style="left:647.5px;top:839.3px;font-size:9.5px;line-height:11.4px;transform:scaleX(0.900)">100</div>
<div class="abs" style="left:695.500px;top:837px;width:11.500px;height:8.500px;background:#e9e9e9;border:1px solid #b4b4b4"></div>
<div class="abs" style="left:695.500px;top:845.500px;width:11.500px;height:8.500px;background:#e9e9e9;border:1px solid #b4b4b4"></div>
<svg class="abs" style="left:695.500px;top:837px" width="12" height="17" viewBox="0 0 12 17"><path d="M3.500 5.800L5.800 3.300L8 5.800z" fill="#000"/><path d="M3.500 11.300L5.800 13.800L8 11.300z" fill="#000"/></svg>
<div class="cb" style="top:801.6px"></div>
<div class="t" style="left:741.5px;top:800.8px;font-size:10px;line-height:12.0px;transform:scaleX(0.821)">1コード毎に停止</div>
<div class="cb" style="top:815.1px"></div>
<div class="t" style="left:741.5px;top:814.3px;font-size:10px;line-height:12.0px;transform:scaleX(0.902)">"/"の行を省略</div>
<div class="cb" style="top:830.2px"></div>
<div class="t" style="left:741.5px;top:829.4px;font-size:10px;line-height:12.0px;transform:scaleX(0.975)">仮想動作</div>
<div class="cb" style="top:844.8px"></div>
<svg class="abs" style="left:729px;top:844.8px" width="10" height="10" viewBox="0 0 10 10"><path d="M2 5L4 7.300L8 2.500" fill="none" stroke="#000" stroke-width="1.100"/></svg>
<div class="t" style="left:741.5px;top:844.0px;font-size:10px;line-height:12.0px;transform:scaleX(0.975)">高速表示</div>
<div class="cb" style="top:858.6px"></div>
<div class="t" style="left:741.5px;top:857.8px;font-size:10px;line-height:12.0px;transform:scaleX(0.933)">輪郭のみ表示</div>
<div class="abs" style="left:0;top:872.500px;width:1555px;height:1.500px;background:#e2e2e2"></div>
<div class="abs" style="left:39px;top:872px;width:232px;height:2px;background:#fafafa;border-top:1px solid #d8d8d8"></div>
<div class="abs" style="left:591px;top:872.500px;width:39px;height:1.500px;background:#f8f8f8"></div>
</body>
</html>
